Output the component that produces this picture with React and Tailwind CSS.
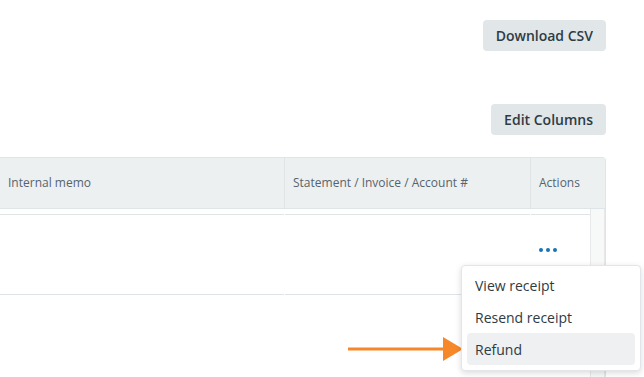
import React from 'react';

const Dots = () => (
    <div className="flex items-center gap-[3px] text-[#1673b8]">
        <span className="block h-[4px] w-[4px] rounded-full bg-[#1673b8]" />
        <span className="block h-[4px] w-[4px] rounded-full bg-[#1673b8]" />
        <span className="block h-[4px] w-[4px] rounded-full bg-[#1673b8]" />
    </div>
);

const Row = ({ children }) => (
    <div className="grid grid-cols-[284px_245px_60px] gap-x-[1px] h-[80px]">
        <div className="border-t border-[#dfe4e6]" />
        <div className="border-t border-[#dfe4e6]" />
        <div className="border-t border-[#dfe4e6] pl-[8px] pt-[33px]">{children}</div>
    </div>
);

export default function App() {
    return (
        <div
            className="relative w-[644px] h-[377px] overflow-hidden bg-white"
            style={{ fontFamily: '"Open Sans", "Liberation Sans", sans-serif' }}
        >
            {/* Toolbar buttons */}
            <div className="flex flex-col items-end pr-[38px] pt-[20px]">
                <button className="h-[31px] px-[13px] rounded-[4px] bg-[#e1e6e8] text-[14px] font-semibold text-[#2d3b45]">
                    Download CSV
                </button>
                <button className="mt-[53px] h-[31px] px-[13px] rounded-[4px] bg-[#e1e6e8] text-[14px] font-semibold text-[#2d3b45]">
                    Edit Columns
                </button>
            </div>

            {/* Table */}
            <div className="mt-[22px] w-[606px] border-t border-r border-[#dfe4e6] rounded-tr-[4px]">
                <div className="grid grid-cols-[284px_1px_245px_1px_75px] h-[51px] bg-[#edf0f1] border-b border-[#dfe4e6] text-[12px] text-[#56646d]">
                    <div className="flex items-center pl-[8px]">Internal memo</div>
                    <div className="bg-[#dfe4e6]" />
                    <div className="flex items-center pl-[8px]">Statement / Invoice / Account #</div>
                    <div className="bg-[#dfe4e6]" />
                    <div className="flex items-center pl-[8px]">Actions</div>
                </div>
                <div className="flex h-[170px]">
                    <div className="w-[590px] pt-[5px]">
                        <Row>
                            <Dots />
                        </Row>
                        <Row />
                    </div>
                    <div className="w-[15px] bg-[#f7f8f8] border-x border-[#e6e8e9]" />
                </div>
            </div>

            {/* Orange arrow */}
            <svg className="absolute left-[346px] top-[337px]" width="120" height="26" viewBox="0 0 120 26">
                <line x1="2" y1="12" x2="100" y2="12" stroke="#f6882a" strokeWidth="3" />
                <polygon points="97,0 117,12 97,24" fill="#f6882a" />
            </svg>

            {/* Actions menu */}
            <div className="absolute left-[461px] top-[265px] w-[180px] px-[5px] pt-[3px] pb-[5px] bg-white rounded-[4px] border border-[#e3e6e8] shadow-[0_2px_6px_rgba(0,0,0,0.15)] text-[14px] text-[#2d3b45]">
                <div className="h-[32px] flex items-center px-[8px]">View receipt</div>
                <div className="h-[32px] flex items-center px-[8px]">Resend receipt</div>
                <div className="h-[32px] flex items-center px-[8px] rounded-[4px] bg-[#eef0f1]">Refund</div>
            </div>
        </div>
    );
}
